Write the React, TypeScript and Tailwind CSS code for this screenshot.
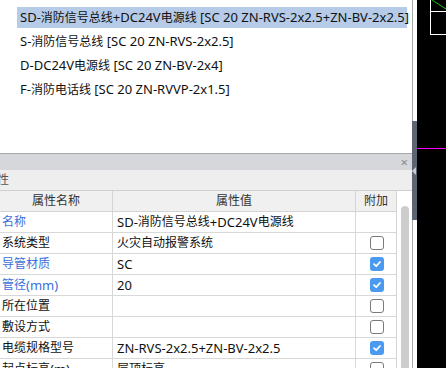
import React from "react";

type Row = { name: string; blue?: boolean; value: string; cb: boolean | null };

const rows: Row[] = [
  { name: "名称", blue: true, value: "SD-消防信号总线+DC24V电源线", cb: null },
  { name: "系统类型", value: "火灾自动报警系统", cb: false },
  { name: "导管材质", blue: true, value: "SC", cb: true },
  { name: "管径(mm)", blue: true, value: "20", cb: true },
  { name: "所在位置", value: "", cb: false },
  { name: "敷设方式", value: "", cb: false },
  { name: "电缆规格型号", value: "ZN-RVS-2x2.5+ZN-BV-2x2.5", cb: true },
  { name: "起点标高(m)", value: "层顶标高", cb: false },
];

const items = [
  "SD-消防信号总线+DC24V电源线 [SC 20 ZN-RVS-2x2.5+ZN-BV-2x2.5]",
  "S-消防信号总线 [SC 20 ZN-RVS-2x2.5]",
  "D-DC24V电源线 [SC 20 ZN-BV-2x4]",
  "F-消防电话线 [SC 20 ZN-RVVP-2x1.5]",
];

function Mixed({ text }: { text: string }) {
  const parts = text.split(/([\u4e00-\u9fff]+)/).filter((p) => p.length > 0);
  return (
    <>
      {parts.map((p, i) =>
        /[\u4e00-\u9fff]/.test(p) ? (
          <span key={i} className="text-[12px]">
            {p}
          </span>
        ) : (
          <span key={i} className="text-[13px] whitespace-pre">
            {p}
          </span>
        )
      )}
    </>
  );
}

function Check({ on }: { on: boolean }) {
  if (on) {
    return (
      <div className="w-[14px] h-[14px] rounded-[3px] bg-[#4a9af2] flex items-center justify-center">
        <svg width="10" height="10" viewBox="0 0 10 10">
          <polyline points="2,5.2 4.2,7.2 8,3" fill="none" stroke="#ffffff" strokeWidth="1.8" strokeLinecap="round" strokeLinejoin="round" />
        </svg>
      </div>
    );
  }
  return <div className="w-[14px] h-[14px] rounded-[3px] border border-[#7a7a7a] bg-white" />;
}

export default function App() {
  return (
    <div className="w-[446px] h-[368px] overflow-hidden flex bg-white font-['Noto_Sans','Noto_Sans_CJK_SC',sans-serif] text-[12px] leading-none">
      <div className="w-[412px] flex flex-col shrink-0">
        {/* top list */}
        <div className="h-[154px] shrink-0 border-b border-[#a8a8a8] bg-white pt-[7px] pl-[17px] pr-[5px] flex flex-col gap-[3px]">
          {items.map((t, i) => (
            <div
              key={i}
              className={
                "h-[21px] flex items-center pl-[3px] whitespace-nowrap text-[#111] " +
                (i === 0 ? "bg-[#b5cbe8]" : "")
              }
            >
              <Mixed text={t} />
            </div>
          ))}
        </div>
        {/* title bar */}
        <div className="h-[16px] shrink-0 bg-[#d6d7db] flex items-center justify-end pr-[4px]">
          <span className="text-[#8a8a8a] text-[13px] leading-none">×</span>
        </div>
        {/* section */}
        <div className="h-[21px] shrink-0 bg-[#eeeeee] border-b border-[#d0d0d0] flex items-center">
          <span className="-ml-[15px] text-[#555] whitespace-nowrap">属性</span>
        </div>
        {/* table */}
        <div className="flex-1 flex min-h-0">
          <div className="w-[397px] flex flex-col border-r border-[#d4d4d4]">
            <div className="h-[21px] shrink-0 flex bg-[#f0f0f0] border-b border-[#d4d4d4] text-[#333]">
              <div className="w-[113px] flex items-center justify-center border-r border-[#d4d4d4]">属性名称</div>
              <div className="w-[243px] flex items-center justify-center border-r border-[#d4d4d4]">属性值</div>
              <div className="flex-1 flex items-center justify-center">附加</div>
            </div>
            {rows.map((r, i) => (
              <div key={i} className="h-[21px] shrink-0 flex border-b border-[#d8d8d8] bg-white">
                <div
                  className={
                    "w-[113px] flex items-center pl-[2px] border-r border-[#d8d8d8] whitespace-nowrap " +
                    (r.blue ? "text-[#3b6fd9]" : "text-[#111]")
                  }
                >
                  <Mixed text={r.name} />
                </div>
                <div className="w-[243px] flex items-center pl-[4px] border-r border-[#d8d8d8] whitespace-nowrap text-[#111]">
                  <Mixed text={r.value} />
                </div>
                <div className="flex-1 flex items-center justify-center pl-[1px]">
                  {r.cb !== null && <Check on={r.cb} />}
                </div>
              </div>
            ))}
          </div>
          <div className="w-[15px] flex flex-col pt-[15px] pl-[4px] pr-[3px]">
            <div className="flex-1 rounded-t-full bg-[#cdcdcd]" />
          </div>
        </div>
      </div>
      {/* splitter */}
      <div className="w-[5px] shrink-0 flex flex-col">
        <div className="h-[121px] border-l border-[#a8a8a8] bg-white" />
        <div className="h-[99px] bg-[#5d6572] relative">
          <div className="absolute left-0 top-[46px] w-0 h-0 border-y-[4px] border-y-transparent border-r-[4px] border-r-[#c9ccd2]" />
        </div>
        <div className="flex-1 border-l border-[#a8a8a8] bg-white" />
      </div>
      {/* canvas */}
      <div className="flex-1 bg-black relative">
        <svg className="absolute inset-0" width="29" height="368" viewBox="0 0 29 368">
          <line x1="13.5" y1="0" x2="13.5" y2="35" stroke="#ffffff" strokeWidth="1" />
          <line x1="13" y1="11.5" x2="29" y2="11.5" stroke="#ffffff" strokeWidth="1" />
          <line x1="13" y1="34.5" x2="29" y2="34.5" stroke="#ffffff" strokeWidth="1" />
          <line x1="15" y1="0" x2="29" y2="9" stroke="#19c219" strokeWidth="1" />
          <line x1="0" y1="148.5" x2="29" y2="148.5" stroke="#ff00ff" strokeWidth="1" />
        </svg>
      </div>
    </div>
  );
}
